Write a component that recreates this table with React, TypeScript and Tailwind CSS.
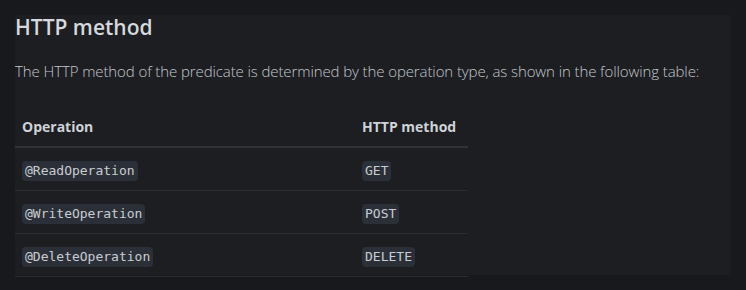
import React from 'react';

const rows = [
  { op: '@ReadOperation', method: 'GET' },
  { op: '@WriteOperation', method: 'POST' },
  { op: '@DeleteOperation', method: 'DELETE' },
];

const sans = "font-['Open_Sans',sans-serif]";
const mono = "font-['DejaVu_Sans_Mono',monospace]";

function Code({ children }: { children: React.ReactNode }) {
  return (
    <code className={`${mono} text-[13px] leading-[20px] text-[#c9cdd2] bg-[#2b3038] rounded-[4px] px-[3px] inline-block`}>
      {children}
    </code>
  );
}

export default function App() {
  return (
    <div className={`w-[746px] h-[290px] bg-[#17191c] pt-[15px] pl-[15px] ${sans}`}>
      <div className="w-[716px] h-[260px] bg-[#1c1e22]">
        <h2 className="text-[21px] font-semibold leading-[24px] text-[#d6d8db]">HTTP method</h2>
        <p className="mt-[20px] text-[15px] font-light leading-[24px] text-[#c3c7cc] tracking-[-0.1px]">
          The HTTP method of the predicate is determined by the operation type, as shown in the following table:
        </p>
        <table className="mt-[23px] w-[453px] border-collapse">
          <thead>
            <tr className="border-b-2 border-[#2f3338]">
              <th className="text-left text-[14px] font-bold text-[#cfd2d6] pl-[7px] h-[41px] w-[347px]">Operation</th>
              <th className="text-left text-[14px] font-bold text-[#cfd2d6]">HTTP method</th>
            </tr>
          </thead>
          <tbody>
            {rows.map((r) => (
              <tr key={r.op} className="border-b border-[#2a2d32]">
                <td className="pl-[7px] h-[43px]"><Code>{r.op}</Code></td>
                <td><Code>{r.method}</Code></td>
              </tr>
            ))}
          </tbody>
        </table>
      </div>
    </div>
  );
}
